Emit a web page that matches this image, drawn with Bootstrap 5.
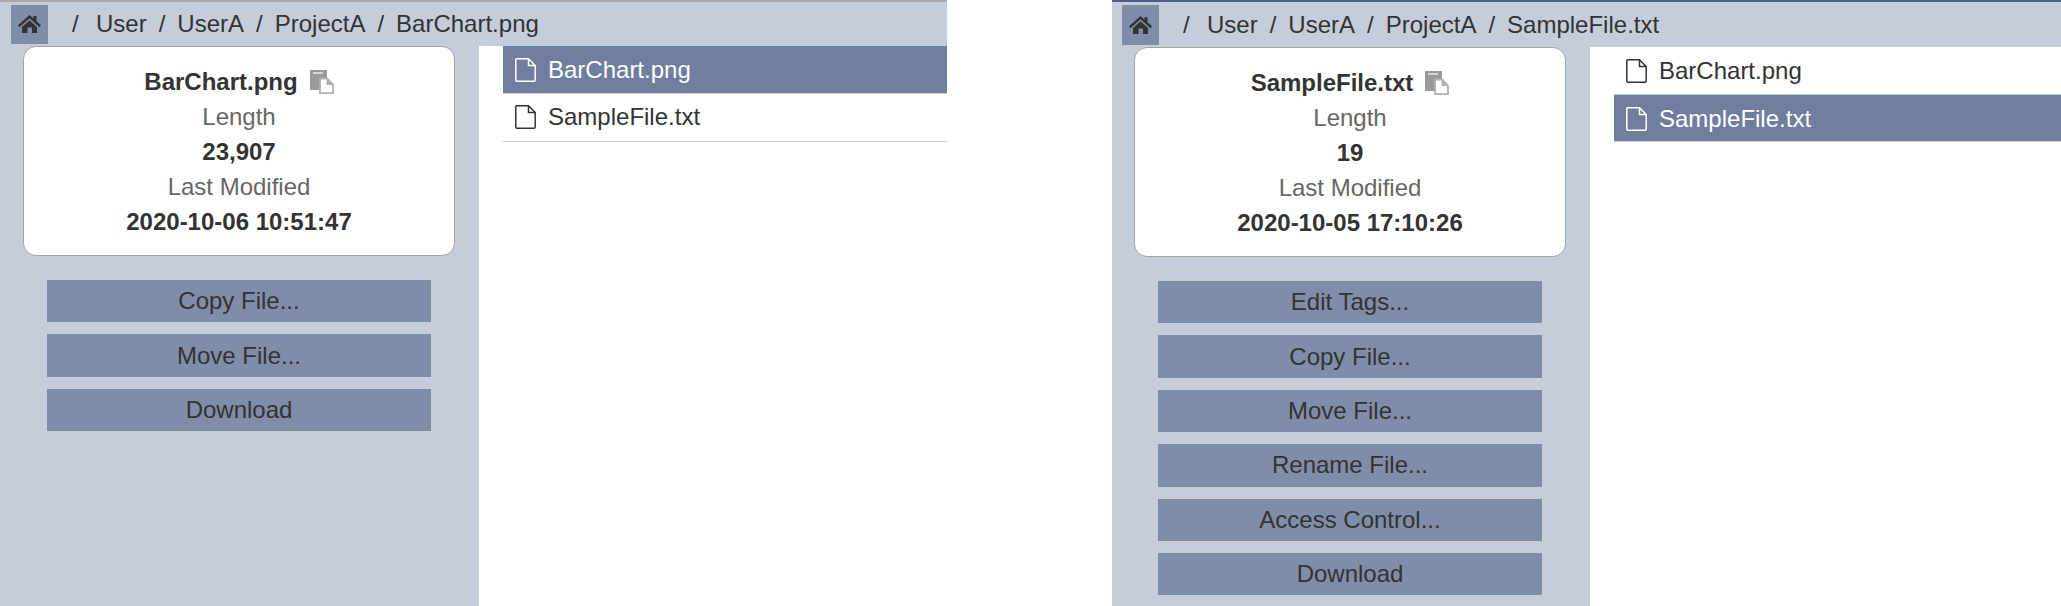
<!DOCTYPE html>
<html lang="en">
<head>
    <meta charset="UTF-8">
    <meta name="viewport" content="width=device-width, initial-scale=1.0">
    <title>File Browser</title>
    <link rel="stylesheet" href="https://cdn.jsdelivr.net/npm/bootstrap@5.3.0/dist/css/bootstrap.min.css">
    <style>
        html, body {
            height: 606px;
            overflow: hidden;
        }
        body {
            font-family: "Liberation Sans", Arial, sans-serif;
            font-size: 24px;
            color: #333;
            background-color: #fff;
        }
        .browser-left { width: 947px; height: 606px; }
        .browser-right { width: 949px; height: 606px; margin-left: 165px; }
        .path-bar {
            background-color: #c5cddb;
            border-top: 2px solid #aaa;
            height: 46px;
            padding-left: 11px;
        }
        .browser-right .path-bar {
            border-top-color: #4c5f87;
            height: 47px;
            padding-left: 10px;
        }
        .home-btn {
            width: 37px;
            height: 39px;
            background-color: #808da8;
            border: 0;
            border-radius: 0;
            padding: 0;
        }
        .browser-right .home-btn { height: 40px; margin-top: 1px; }
        .home-btn:hover { background-color: #808da8; }
        .path-bar .breadcrumb {
            --bs-breadcrumb-divider: "/";
            --bs-breadcrumb-margin-bottom: 0;
            --bs-breadcrumb-item-padding-x: 12px;
            --bs-breadcrumb-divider-color: #333;
            --bs-breadcrumb-item-active-color: #333;
            margin-left: 24px;
            line-height: 1;
        }
        .path-bar .breadcrumb-item:first-child { width: 7px; }
        .path-bar .breadcrumb-item:nth-child(2) { padding-left: 17px; }
        .path-bar .breadcrumb-item:nth-child(2)::before { display: none; }
        .side-panel {
            background-color: #c5cddb;
            width: 479px;
            padding-left: 23px;
        }
        .browser-right .side-panel { width: 478px; padding-left: 22px; }
        .info-box {
            width: 432px;
            height: 210px;
            padding: 17px 0;
            border: 1px solid #a3a3a3;
            border-radius: 13px;
            line-height: 35px;
        }
        .info-label { color: #666; }
        .copy-icon { margin-left: 12px; vertical-align: -4px; }
        .action-list {
            width: 384px;
            margin-top: 24px;
            margin-left: 24px;
            gap: 12px;
        }
        .action-btn {
            background-color: #808da8;
            color: #333;
            border: 0;
            border-radius: 0;
            font-size: 24px;
            height: 42.4px;
            padding: 0;
        }
        .action-btn:hover { background-color: #808da8; color: #333; }
        .file-list { margin-left: 24px; --bs-list-group-border-radius: 0; }
        .file-row {
            height: 48px;
            font-size: 24px;
            color: #333;
            padding: 0 12px;
            border-width: 0 0 1px;
            border-color: #ccc;
            gap: 12px;
        }
        .file-row.active {
            background-color: #6f7e9e;
            border-color: #ccc;
            color: #fff;
        }
        .browser-right .file-row:not(.active) { border-color: #bbb; }
        .browser-left .file-row:not(.active) { padding-bottom: 2px; }
        .browser-right .file-row.active { padding-top: 2px; }
    </style>
</head>
<body>
    <div class="d-flex">
        <!-- left window -->
        <div class="browser-left d-flex flex-column">
            <div class="path-bar d-flex align-items-center">
                <button class="btn home-btn d-flex align-items-center justify-content-center" type="button">
                    <svg width="23" height="18" viewBox="0 0 23 18"><path fill="#333" d="M11.500 0 15.500 3.600V1h3v5.300L23 10.300l-1.500 1.900-10-8.900-10 8.900L0 10.300zM4 12l7.500-6.700L19 12v6h-5v-5.500H9.500V18H4z"/></svg>
                </button>
                <ol class="breadcrumb">
                    <li class="breadcrumb-item">/</li>
                    <li class="breadcrumb-item">User</li>
                    <li class="breadcrumb-item">UserA</li>
                    <li class="breadcrumb-item">ProjectA</li>
                    <li class="breadcrumb-item active">BarChart.png</li>
                </ol>
            </div>
            <div class="d-flex flex-grow-1">
                <div class="side-panel flex-shrink-0">
                    <div class="card info-box text-center">
                        <div class="fw-bold">BarChart.png<svg class="copy-icon" width="24" height="24" viewBox="0 0 24 24"><path fill="#9a9a9a" d="M0 0h17v8h-7v12H0z"/><rect x="3" y="2" width="10" height="2" fill="#d5d5d5"/><path fill="#fff" stroke="#b0b0b0" stroke-width="1.800" d="M10 8.500h7l6 6v8.600H10z"/><path fill="#b0b0b0" d="M16.500 9v6h6z"/></svg></div>
                        <div class="info-label">Length</div>
                        <div class="fw-bold">23,907</div>
                        <div class="info-label">Last Modified</div>
                        <div class="fw-bold">2020-10-06 10:51:47</div>
                    </div>
                    <div class="action-list d-flex flex-column">
                        <button class="btn action-btn" type="button">Copy File...</button>
                        <button class="btn action-btn" type="button">Move File...</button>
                        <button class="btn action-btn" type="button">Download</button>
                    </div>
                </div>
                <div class="list-group file-list flex-grow-1">
                    <a class="list-group-item file-row active d-flex align-items-center" href="#">
                        <svg width="21" height="24" viewBox="0 0 21 24"><path fill="none" stroke="currentColor" stroke-width="1.500" d="M1.500.8h12l6.700 6.700V22a1.300 1.300 0 0 1-1.300 1.300H1.800A1.300 1.300 0 0 1 .8 22V1.500zM13.500.8v6.700h6.700"/></svg>
                        <span>BarChart.png</span>
                    </a>
                    <a class="list-group-item file-row d-flex align-items-center" href="#">
                        <svg width="21" height="24" viewBox="0 0 21 24"><path fill="none" stroke="currentColor" stroke-width="1.500" d="M1.500.8h12l6.700 6.700V22a1.300 1.300 0 0 1-1.300 1.300H1.800A1.300 1.300 0 0 1 .8 22V1.500zM13.500.8v6.700h6.700"/></svg>
                        <span>SampleFile.txt</span>
                    </a>
                </div>
            </div>
        </div>
        <!-- right window -->
        <div class="browser-right d-flex flex-column">
            <div class="path-bar d-flex align-items-center">
                <button class="btn home-btn d-flex align-items-center justify-content-center" type="button">
                    <svg width="23" height="18" viewBox="0 0 23 18"><path fill="#333" d="M11.500 0 15.500 3.600V1h3v5.300L23 10.300l-1.500 1.900-10-8.900-10 8.900L0 10.300zM4 12l7.500-6.700L19 12v6h-5v-5.500H9.500V18H4z"/></svg>
                </button>
                <ol class="breadcrumb">
                    <li class="breadcrumb-item">/</li>
                    <li class="breadcrumb-item">User</li>
                    <li class="breadcrumb-item">UserA</li>
                    <li class="breadcrumb-item">ProjectA</li>
                    <li class="breadcrumb-item active">SampleFile.txt</li>
                </ol>
            </div>
            <div class="d-flex flex-grow-1">
                <div class="side-panel flex-shrink-0">
                    <div class="card info-box text-center">
                        <div class="fw-bold">SampleFile.txt<svg class="copy-icon" width="24" height="24" viewBox="0 0 24 24"><path fill="#9a9a9a" d="M0 0h17v8h-7v12H0z"/><rect x="3" y="2" width="10" height="2" fill="#d5d5d5"/><path fill="#fff" stroke="#b0b0b0" stroke-width="1.800" d="M10 8.500h7l6 6v8.600H10z"/><path fill="#b0b0b0" d="M16.500 9v6h6z"/></svg></div>
                        <div class="info-label">Length</div>
                        <div class="fw-bold">19</div>
                        <div class="info-label">Last Modified</div>
                        <div class="fw-bold">2020-10-05 17:10:26</div>
                    </div>
                    <div class="action-list d-flex flex-column">
                        <button class="btn action-btn" type="button">Edit Tags...</button>
                        <button class="btn action-btn" type="button">Copy File...</button>
                        <button class="btn action-btn" type="button">Move File...</button>
                        <button class="btn action-btn" type="button">Rename File...</button>
                        <button class="btn action-btn" type="button">Access Control...</button>
                        <button class="btn action-btn" type="button">Download</button>
                    </div>
                </div>
                <div class="list-group file-list flex-grow-1">
                    <a class="list-group-item file-row d-flex align-items-center" href="#">
                        <svg width="21" height="24" viewBox="0 0 21 24"><path fill="none" stroke="currentColor" stroke-width="1.500" d="M1.500.8h12l6.700 6.700V22a1.300 1.300 0 0 1-1.300 1.300H1.800A1.300 1.300 0 0 1 .8 22V1.500zM13.500.8v6.700h6.700"/></svg>
                        <span>BarChart.png</span>
                    </a>
                    <a class="list-group-item file-row active d-flex align-items-center" href="#">
                        <svg width="21" height="24" viewBox="0 0 21 24"><path fill="none" stroke="currentColor" stroke-width="1.500" d="M1.500.8h12l6.700 6.700V22a1.300 1.300 0 0 1-1.300 1.300H1.800A1.300 1.300 0 0 1 .8 22V1.500zM13.500.8v6.700h6.700"/></svg>
                        <span>SampleFile.txt</span>
                    </a>
                </div>
            </div>
        </div>
    </div>
    <script src="https://cdn.jsdelivr.net/npm/bootstrap@5.3.0/dist/js/bootstrap.bundle.min.js"></script>
</body>
</html>
